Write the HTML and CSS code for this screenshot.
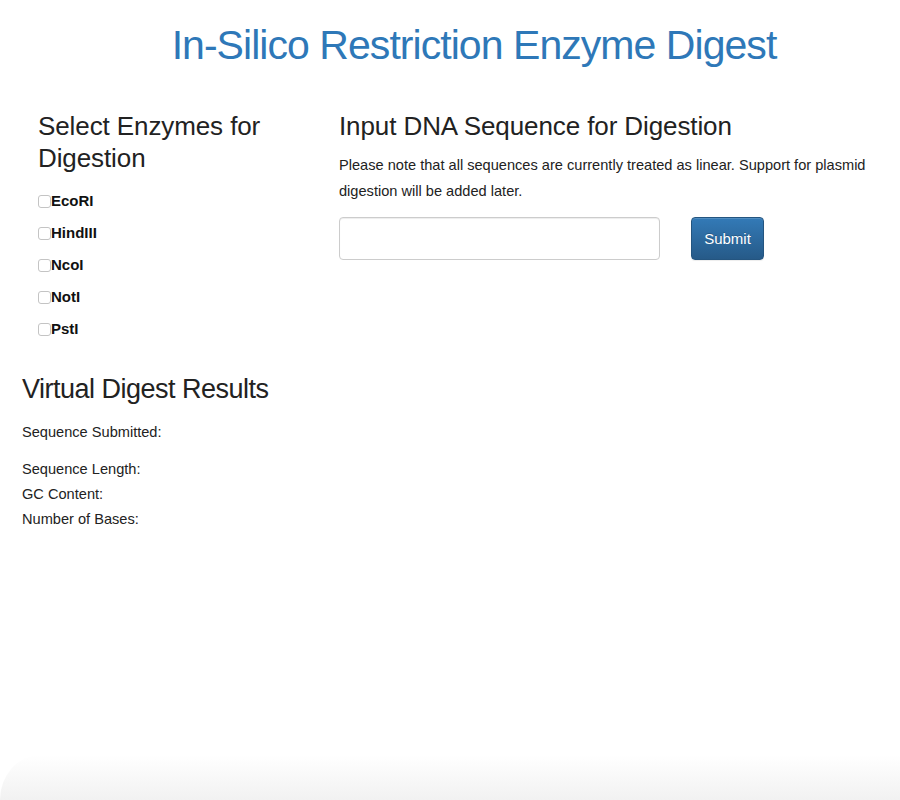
FILE: index.html
```html
<!DOCTYPE html>
<html>
<head>
<meta charset="utf-8">
<title>In-Silico Restriction Enzyme Digest</title>
<link rel="stylesheet" href="styles.css">
</head>
<body>
<div class="page">
  <h1 class="title">In-Silico Restriction Enzyme Digest</h1>
  <div class="row">
    <div class="col-left">
      <h3 class="heading">Select Enzymes for Digestion</h3>
      <ul class="enzymes">
        <li><label><input type="checkbox"><span>EcoRI</span></label></li>
        <li><label><input type="checkbox"><span>HindIII</span></label></li>
        <li><label><input type="checkbox"><span>NcoI</span></label></li>
        <li><label><input type="checkbox"><span>NotI</span></label></li>
        <li><label><input type="checkbox"><span>PstI</span></label></li>
      </ul>
    </div>
    <div class="col-right">
      <h3 class="heading">Input DNA Sequence for Digestion</h3>
      <p class="note">Please note that all sequences are currently treated as linear. Support for plasmid digestion will be added later.</p>
      <div class="form-row">
        <input class="seq-input" type="text">
        <button class="btn-submit" type="button">Submit</button>
      </div>
    </div>
  </div>
  <div class="results">
    <h2 class="results-title">Virtual Digest Results</h2>
    <p class="res-line first">Sequence Submitted:</p>
    <p class="res-line">Sequence Length:</p>
    <p class="res-line">GC Content:</p>
    <p class="res-line">Number of Bases:</p>
  </div>
</div>
<div class="bottom-shade"></div>
</body>
</html>
```

FILE: styles.css
```css
html, body {
  margin: 0;
  padding: 0;
  background: #fff;
}
body {
  font-family: "Liberation Sans", Arial, Helvetica, sans-serif;
  color: #222;
  width: 900px;
  height: 800px;
  overflow: hidden;
  position: relative;
}
.page {
  padding-top: 18px;
}
.title {
  margin: 0;
  padding-left: 48px;
  text-align: center;
  font-size: 41px;
  font-weight: normal;
  line-height: 54px;
  color: #2e78b8;
  letter-spacing: -0.95px;
}
.row {
  display: flex;
  margin-top: 38px;
}
.col-left {
  width: 339px;
  padding-left: 38px;
  box-sizing: border-box;
}
.col-right {
  flex: 1;
}
.heading {
  margin: 0;
  font-size: 26px;
  font-weight: normal;
  line-height: 32px;
  color: #222;
  letter-spacing: -0.1px;
}
.enzymes {
  list-style: none;
  margin: 16px 0 0 0;
  padding: 0;
}
.enzymes li {
  height: 32px;
}
.enzymes label {
  display: flex;
  align-items: center;
  font-weight: bold;
  font-size: 15px;
  color: #111;
  height: 20px;
}
.enzymes input {
  -webkit-appearance: none;
  appearance: none;
  width: 13px;
  height: 13px;
  margin: 3px 0 0 0;
  border: 1px solid #c4c4c4;
  border-radius: 3px;
  background: #fff;
  box-sizing: border-box;
}
.note {
  margin: 10px 0 0 0;
  font-size: 14.6px;
  line-height: 26px;
  color: #222;
  width: 545px;
}
.form-row {
  display: flex;
  align-items: center;
  margin-top: 13px;
}
.seq-input {
  width: 321px;
  height: 43px;
  box-sizing: border-box;
  border: 1px solid #ccc;
  border-radius: 4px;
  box-shadow: inset 0 1px 1px rgba(0,0,0,0.075);
  margin: 0;
  padding: 6px 12px;
  font-size: 15px;
}
.btn-submit {
  margin-left: 31px;
  width: 73px;
  height: 43px;
  border: 1px solid #245580;
  border-radius: 4px;
  background: linear-gradient(to bottom, #337ab7 0%, #265a88 100%);
  color: #fff;
  font-family: "Liberation Sans", Arial, sans-serif;
  font-size: 15px;
  padding: 0;
  box-shadow: inset 0 1px 0 rgba(255,255,255,0.15), 0 1px 1px rgba(0,0,0,0.075);
  text-shadow: 0 -1px 0 rgba(0,0,0,0.2);
}
.results {
  padding-left: 22px;
  margin-top: 22px;
}
.results-title {
  margin: 0;
  font-size: 27px;
  font-weight: normal;
  line-height: 34px;
  color: #222;
  letter-spacing: -0.5px;
}
.res-line {
  margin: 0;
  font-size: 14.6px;
  line-height: 25px;
  color: #222;
}
.res-line.first {
  margin-top: 14px;
  margin-bottom: 12px;
}
.bottom-shade {
  position: absolute;
  left: 0;
  right: 0;
  bottom: 0;
  height: 45px;
  background: linear-gradient(to bottom, rgba(240,240,240,0), rgba(240,240,240,0.9));
  border-top-left-radius: 40px 45px;
  pointer-events: none;
}
```
